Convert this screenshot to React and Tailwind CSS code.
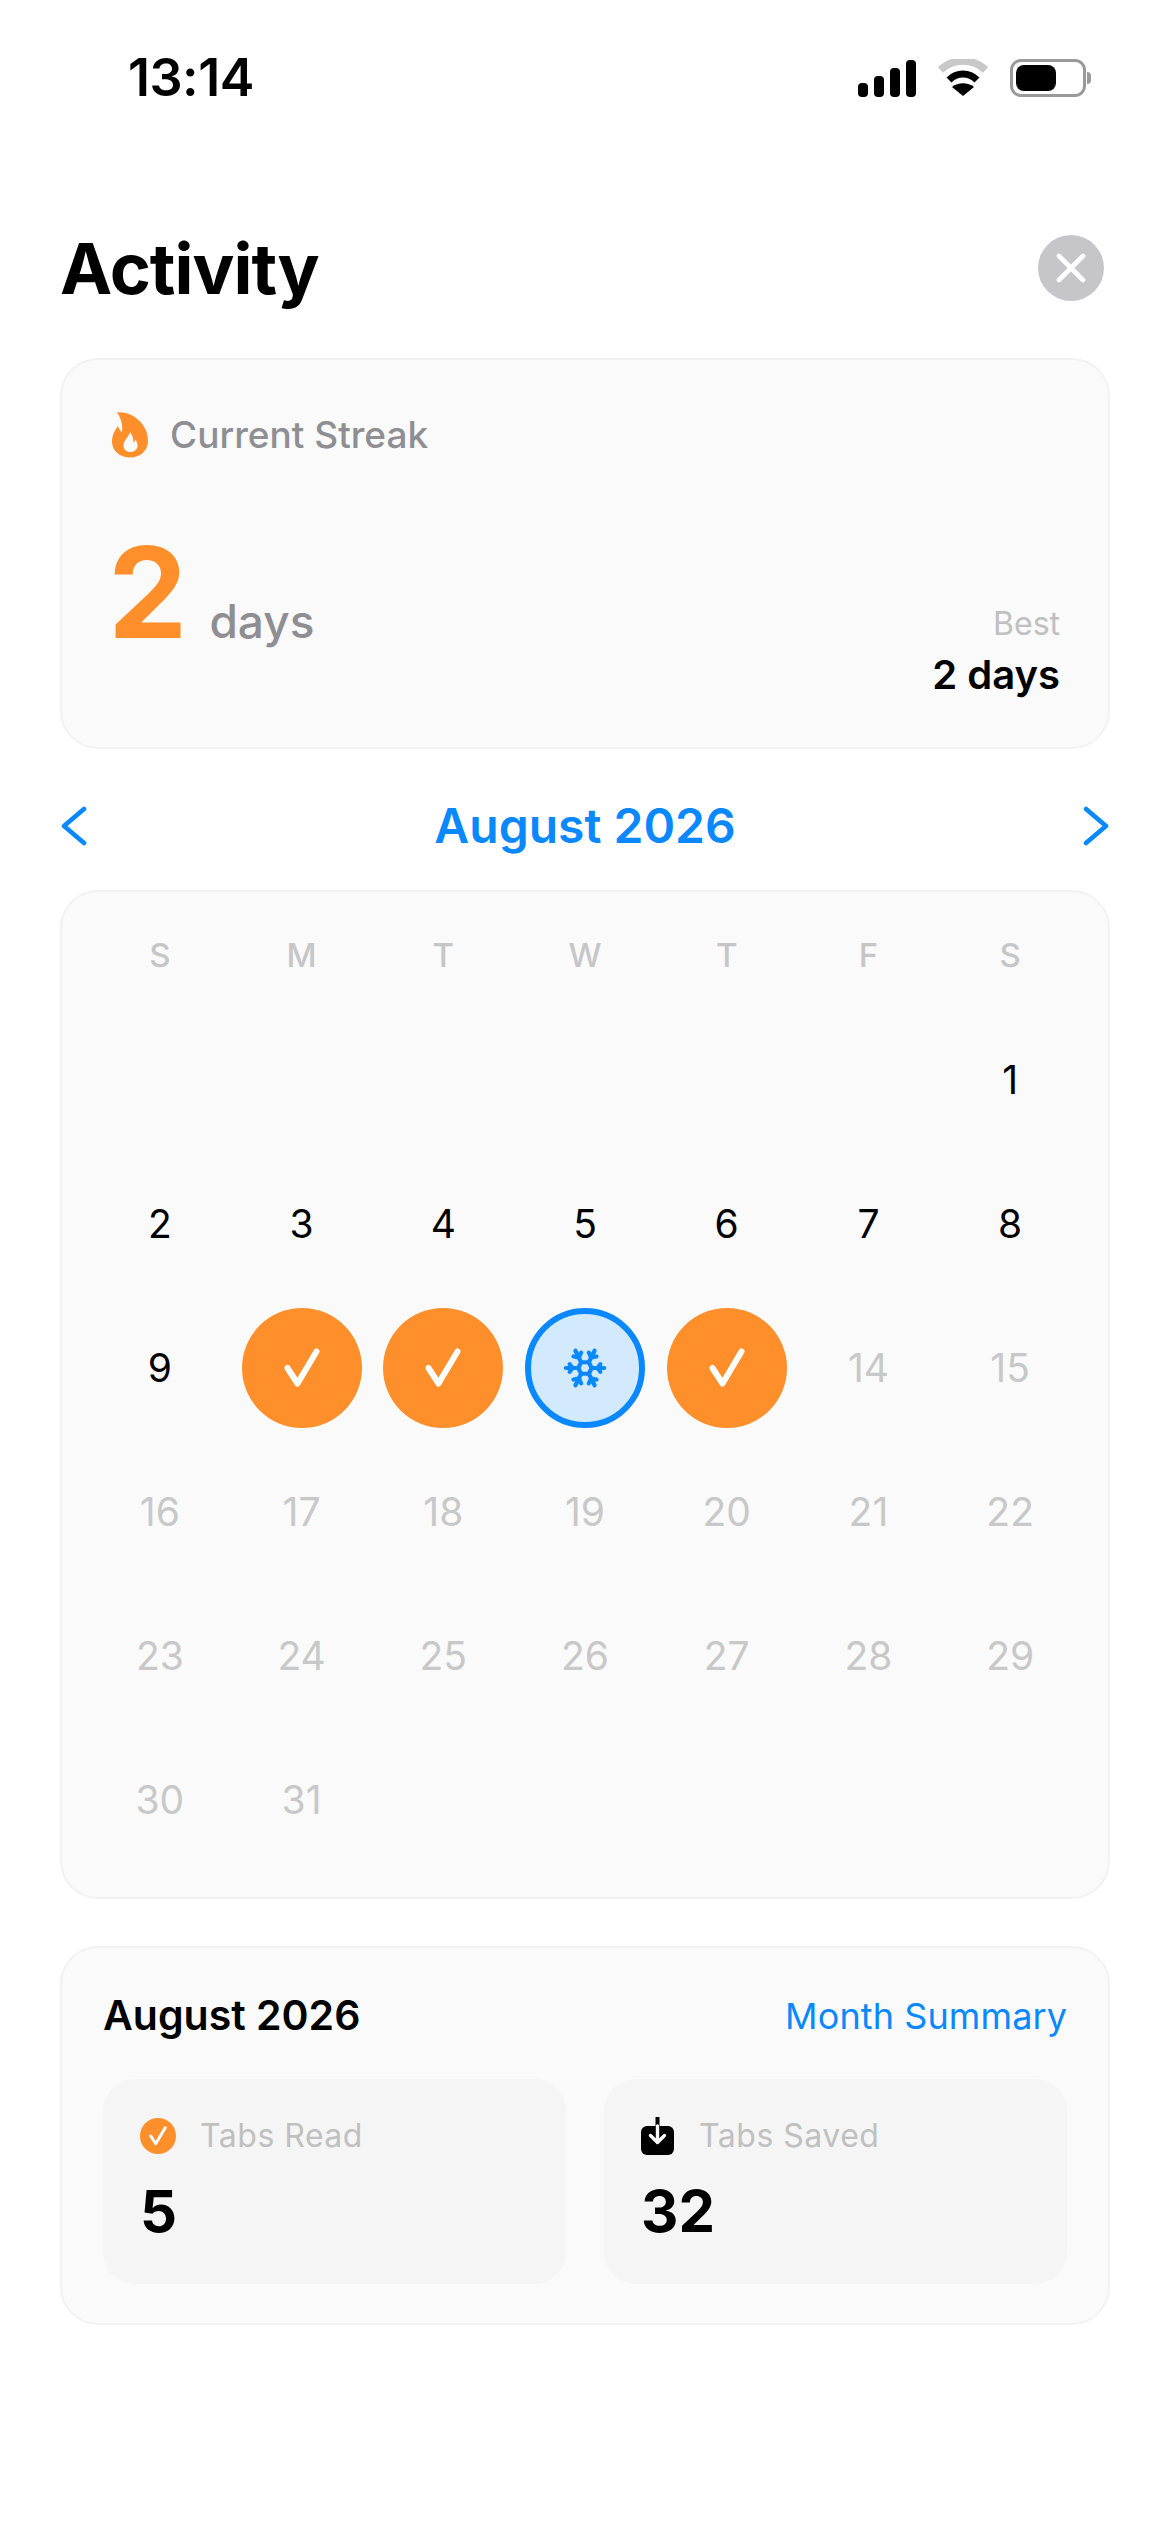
import { Snowflake } from 'lucide-react';

const weekdays = ['S', 'M', 'T', 'W', 'T', 'F', 'S'];

const days = [
  null, null, null, null, null, null, 1,
  2, 3, 4, 5, 6, 7, 8,
  9, 'done', 'done', 'frozen', 'done', 14, 15,
  16, 17, 18, 19, 20, 21, 22,
  23, 24, 25, 26, 27, 28, 29,
  30, 31, null, null, null, null, null,
];

const Check = ({ className }) => (
  <svg viewBox="0 0 36 40" className={className} fill="none" stroke="currentColor" strokeWidth="6" strokeLinecap="round" strokeLinejoin="round">
    <path d="M3.5 20 L13.5 35.5 L32.5 3.5" />
  </svg>
);

const Flame = () => (
  <svg viewBox="0 0 36 46" className="w-[36px] h-[46px] text-[#FF8F2B]">
    <path
      fill="currentColor"
      fillRule="evenodd"
      d="M5 0.5 C18 -1 36 10 36 29 C36 39 28 45.5 18 45.5 C8 45.5 0 39 0 29.5 C0 23 3 18 6 14 C7 17 8 19 10 20 C11 13 9 6 5 0.5 Z M18 20 C17 25 11.5 28 11.5 33.5 C11.5 37.5 14.5 40 18.5 40 C22.5 40 25.5 37.5 25.5 33.5 C25.5 31 24.5 29 23.5 27.5 C23 29 22.5 30 21.5 30.5 C21.5 27 20.5 23 18 20 Z"
    />
  </svg>
);

const StatusBar = () => (
  <div className="h-[156px] flex justify-between items-center pl-[128px] pr-[79px]">
    <span className="text-[52px] font-semibold tracking-[-0.5px] text-black">13:14</span>
    <div className="flex items-center gap-[22px]">
      <svg viewBox="0 0 58 37" className="w-[58px] h-[37px]">
        <rect x="0" y="23" width="10" height="14" rx="4" fill="#000" />
        <rect x="16" y="16" width="10" height="21" rx="4" fill="#000" />
        <rect x="32" y="8" width="10" height="29" rx="4" fill="#000" />
        <rect x="48" y="0" width="10" height="37" rx="4" fill="#000" />
      </svg>
      <svg viewBox="0 0 50 38" className="w-[50px] h-[38px]">
        <path d="M2.5 11 C15 -1 35 -1 47.5 11" fill="none" stroke="#c8c8c8" strokeWidth="7.5" />
        <path d="M11 21 C19 13 31 13 39 21" fill="none" stroke="#000" strokeWidth="7" />
        <path d="M25 37 L14 28 C20 23 30 23 36 28 Z" fill="#000" />
      </svg>
      <div className="flex items-center">
        <div className="w-[76px] h-[38px] rounded-[11px] border-[3px] border-[#9a9a9a] p-[3px]">
          <div className="w-[40px] h-full rounded-[8px] bg-black" />
        </div>
        <div className="w-[4px] h-[12px] rounded-r-full bg-[#9a9a9a] ml-[1px]" />
      </div>
    </div>
  </div>
);

const DayCell = ({ day, index }) => {
  if (day === null) return <div className="h-[120px]" />;

  if (day === 'done') {
    return (
      <div className="h-[120px] flex items-center justify-center">
        <div className="w-[120px] h-[120px] rounded-full bg-[#FF8F2B] flex items-center justify-center text-white">
          <Check className="w-[36px] h-[40px]" />
        </div>
      </div>
    );
  }

  if (day === 'frozen') {
    return (
      <div className="h-[120px] flex items-center justify-center">
        <div className="w-[120px] h-[120px] rounded-full bg-[#D2E9FE] border-[6px] border-[#0A88FF] flex items-center justify-center text-[#0A88FF]">
          <Snowflake className="w-[46px] h-[46px]" strokeWidth={2.2} />
        </div>
      </div>
    );
  }

  const muted = index > 18;
  return (
    <div className={`h-[120px] flex items-center justify-center text-[39px] ${muted ? 'text-[#C8C8C8]' : 'text-black'}`}>
      {day}
    </div>
  );
};

const StatCard = ({ icon, label, value }) => (
  <div className="flex-1 h-[205px] rounded-[32px] bg-[#F5F5F5] pl-[37px] pt-[37px]">
    <div className="flex items-center gap-[24px] h-[40px]">
      {icon}
      <span className="text-[32px] text-[#C0C0C0] tracking-[0.5px]">{label}</span>
    </div>
    <div className="text-[58px] font-bold text-black mt-[20px] leading-[70px]">{value}</div>
  </div>
);

export default function App() {
  return (
    <div className="w-[1170px] h-[2532px] bg-white font-['Inter',sans-serif] overflow-hidden">
      <StatusBar />

      <div className="px-[60px]">
        <div className="flex justify-between items-center h-[66px] mt-[79px] pr-[6px]">
          <h1 className="text-[70px] font-bold text-black tracking-[-1px]">Activity</h1>
          <div className="w-[66px] h-[66px] rounded-full bg-[#C6C6C8] flex items-center justify-center">
            <svg viewBox="0 0 30 30" className="w-[30px] h-[30px]" fill="none" stroke="#fff" strokeWidth="4.6" strokeLinecap="round">
              <path d="M3 3 L27 27 M27 3 L3 27" />
            </svg>
          </div>
        </div>

        {/* Streak */}
        <div className="mt-[57px] h-[391px] rounded-[38px] bg-[#FAFAFA] border-2 border-[#F2F2F2] pl-[50px] pr-[48px] pt-[52px]">
          <div className="flex items-center gap-[22px] h-[46px]">
            <Flame />
            <span className="text-[37px] font-medium text-[#8E8E93]">Current Streak</span>
          </div>
          <div className="flex justify-between items-end mt-[59px]">
            <div className="flex items-baseline gap-[22px] -ml-[4px] mb-[35px]">
              <span className="text-[126px] leading-[150px] font-bold text-[#FF8F2B]">2</span>
              <span className="text-[46px] font-medium text-[#8E8E93]">days</span>
            </div>
            <div className="text-right">
              <div className="text-[32px] leading-[40px] text-[#C0C0C0]">Best</div>
              <div className="text-[40px] leading-[54px] font-semibold text-black mt-[4px]">2 days</div>
            </div>
          </div>
        </div>

        {/* Month switcher */}
        <div className="flex justify-between items-center h-[60px] mt-[47px]">
          <svg viewBox="0 0 28 40" className="w-[28px] h-[40px]" fill="none" stroke="#0A88FF" strokeWidth="4.6" strokeLinecap="round" strokeLinejoin="round">
            <path d="M24 3 L4 20 L24 37" />
          </svg>
          <span className="text-[48px] font-semibold text-[#0A88FF]">August 2026</span>
          <svg viewBox="0 0 28 40" className="w-[28px] h-[40px]" fill="none" stroke="#0A88FF" strokeWidth="4.6" strokeLinecap="round" strokeLinejoin="round">
            <path d="M4 3 L24 20 L4 37" />
          </svg>
        </div>

        {/* Calendar */}
        <div className="mt-[34px] h-[1009px] rounded-[38px] bg-[#FAFAFA] border-2 border-[#F2F2F2] px-[27px] pt-[43px]">
          <div className="grid grid-cols-7">
            {weekdays.map((d, i) => (
              <div key={i} className="text-center text-[33px] leading-[40px] font-medium text-[#C6C6C8]">{d}</div>
            ))}
          </div>
          <div className="grid grid-cols-7 gap-y-[24px] mt-[45px]">
            {days.map((day, i) => (
              <DayCell key={i} day={day} index={i} />
            ))}
          </div>
        </div>

        {/* Month summary */}
        <div className="mt-[47px] h-[379px] rounded-[38px] bg-[#FAFAFA] border-2 border-[#F2F2F2] px-[41px] pt-[44px]">
          <div className="flex justify-between items-center h-[48px]">
            <span className="text-[41px] font-semibold text-black">August 2026</span>
            <span className="text-[36px] tracking-[0.1px] text-[#0A88FF]">Month Summary</span>
          </div>
          <div className="flex gap-[38px] mt-[39px]">
            <StatCard
              label="Tabs Read"
              value="5"
              icon={
                <div className="w-[36px] h-[36px] rounded-full bg-[#FF8F2B] flex items-center justify-center text-white">
                  <Check className="w-[18px] h-[20px]" />
                </div>
              }
            />
            <StatCard
              label="Tabs Saved"
              value="32"
              icon={
                <svg viewBox="0 0 34 38" className="w-[34px] h-[38px]">
                  <rect x="0" y="9" width="33" height="29" rx="6" fill="#000" />
                  <path d="M16.5 0 V9" stroke="#000" strokeWidth="4" />
                  <path d="M16.5 9 V25 M9.5 18.5 L16.5 25.5 L23.5 18.5" fill="none" stroke="#fff" strokeWidth="3.4" strokeLinecap="round" strokeLinejoin="round" />
                </svg>
              }
            />
          </div>
        </div>
      </div>
    </div>
  );
}
